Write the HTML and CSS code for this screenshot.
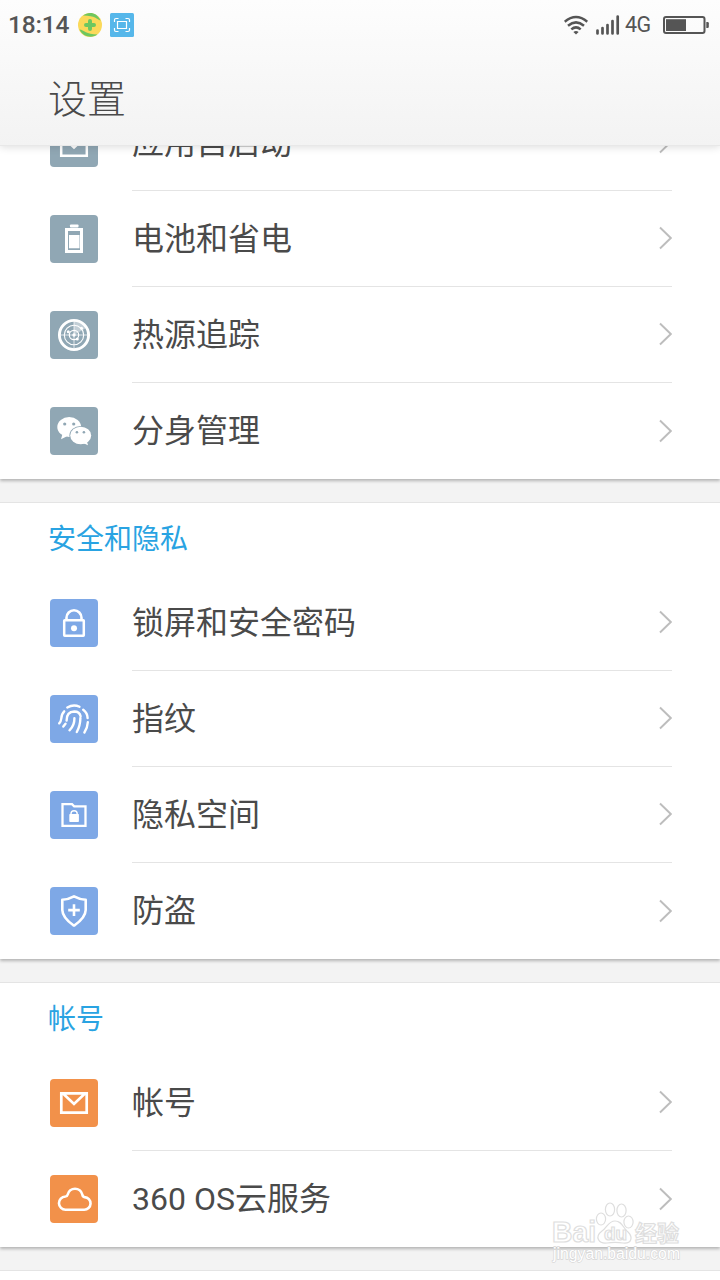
FILE: index.html
```html
<!DOCTYPE html>
<html lang="zh-CN">
<head>
<meta charset="utf-8">
<title>设置</title>
<link rel="stylesheet" href="styles.css">
</head>
<body>
<svg class="defs" aria-hidden="true">
  <symbol id="chevron" viewBox="0 0 14 24"><path d="M2 1.500 12.800 12 2 22.500" fill="none" stroke="#bdbdbd" stroke-width="1.900"/></symbol>
</svg>
<div class="screen">
  <header class="header">
    <div class="status">
      <span class="clock">18:14</span>
      <svg class="app" width="24" height="24" viewBox="0 0 24 24">
        <circle cx="12" cy="12" r="12" fill="#fbd95a"/>
        <path d="M5 2.600C11-2 19-.5 22.500 7.500 19 6.500 17 2.500 5 2.600zM19.500 21.500C14 25.500 5 24 1.500 16.500 6 17 8 21.500 19.500 21.500z" fill="#6dc760"/>
        <path d="M12 8v8M8 12h8" stroke="#6dc760" stroke-width="4" stroke-linecap="round"/>
      </svg>
      <svg class="app" width="24" height="24" viewBox="0 0 24 24">
        <rect width="24" height="24" rx="1.500" fill="#56b7ea"/>
        <path d="M4.500 9V7Q4.500 5.500 6 5.500h2.500M15.500 5.500H18q1.500 0 1.500 1.500v2M19.500 15v2q0 1.500-1.500 1.500h-2.500M8.500 18.500H6q-1.500 0-1.500-1.500v-2M7.500 8.500h9v7h-9z" fill="none" stroke="#fff" stroke-width="1.200"/>
      </svg>
      <span class="spacer"></span>
      <svg class="wifi" width="24" height="20" viewBox="0 0 24 20" fill="none" stroke="#555" stroke-width="2.500">
        <path d="M.7 6.700Q12-2.700 23.300 6.700M4 10.700Q12 4 20 10.700M7.300 14.400Q12 10.400 16.700 14.400"/>
        <path d="M9.400 17Q12 15 14.600 17L12 19.600z" fill="#555" stroke="none"/>
      </svg>
      <svg class="signal" width="24" height="20" viewBox="0 0 24 20" stroke="#555" stroke-width="2.700" stroke-linecap="round">
        <path d="M1.500 15.500v3M6.500 13v5.500M11.500 10v8.500M16.500 6v12.500M21.700 1.500v17"/>
      </svg>
      <span class="net">4G</span>
      <svg class="battery" width="46" height="18" viewBox="0 0 46 18">
        <rect x="1" y="1" width="40.500" height="16" rx="2" fill="none" stroke="#555" stroke-width="2"/>
        <path d="M3 3.200h20v11.800H3z" fill="#555"/>
        <path d="M43.300 6h1.300q1.200 0 1.200 1.200v3.600q0 1.200-1.200 1.200h-1.300z" fill="#555"/>
      </svg>
    </div>
    <h1 class="title">设置</h1>
  </header>

  <main class="scroll">
    <section class="card">
      <div class="row">
        <svg class="icon slate" viewBox="0 0 48 48"><path d="M11.200 11h25.600v25.800H11.200zM17 22l7 6.500 7-6.500" fill="none" stroke="#fff" stroke-width="2.500"/></svg>
        <div class="cell"><span class="label">应用自启动</span><svg class="chev"><use href="#chevron"/></svg></div>
      </div>
      <div class="row">
        <svg class="icon slate" viewBox="0 0 48 48"><rect x="20" y="9.500" width="8.500" height="3" rx=".8" fill="#fff"/><rect x="16.500" y="14.500" width="15" height="22" fill="none" stroke="#fff" stroke-width="3"/><path d="M19 20h10.500v13.300H19z" fill="#fff"/></svg>
        <div class="cell"><span class="label">电池和省电</span><svg class="chev"><use href="#chevron"/></svg></div>
      </div>
      <div class="row">
        <svg class="icon slate" viewBox="0 0 48 48"><path d="M24 24V9a15 15 0 0 1 13 7.500z" fill="#fff" opacity=".45"/><g fill="none" stroke="#fff"><circle cx="24" cy="24" r="14.600" stroke-width="2.900"/><circle cx="24" cy="24" r="9.700" stroke-width="1.100"/><circle cx="24" cy="24" r="4.700" stroke-width="1.200"/><path d="M24 10v28M10 24h28" stroke-width=".9" opacity=".8"/></g><g fill="#fff"><circle cx="24" cy="24" r="1.700"/><circle cx="18.300" cy="20.800" r="1.500"/><circle cx="31.500" cy="17.300" r="1.500"/><circle cx="27.300" cy="28" r="1.500"/></g></svg>
        <div class="cell"><span class="label">热源追踪</span><svg class="chev"><use href="#chevron"/></svg></div>
      </div>
      <div class="row">
        <svg class="icon slate" viewBox="0 0 48 48"><ellipse cx="19.200" cy="20" rx="11.900" ry="10" fill="#fff"/><path d="M12.500 27 11 32.300l6-3z" fill="#fff"/><ellipse cx="30.700" cy="28.500" rx="11.300" ry="9.600" fill="#90a7b4"/><ellipse cx="30.700" cy="28.500" rx="10.500" ry="8.800" fill="#fff"/><path d="M33 36l5 2.300-1.200-4.300z" fill="#fff"/><g fill="#90a7b4"><circle cx="14.700" cy="17" r="1.600"/><circle cx="23.700" cy="17" r="1.600"/><circle cx="26.900" cy="25.300" r="1.300"/><circle cx="33.900" cy="25.300" r="1.300"/></g></svg>
        <div class="cell last"><span class="label">分身管理</span><svg class="chev"><use href="#chevron"/></svg></div>
      </div>
    </section>

    <section class="card">
      <h2 class="heading">安全和隐私</h2>
      <div class="row">
        <svg class="icon blue" viewBox="0 0 48 48"><g fill="none" stroke="#fff"><rect x="14.200" y="21.200" width="19.600" height="15.600" rx=".5" stroke-width="2.500"/><path d="M16.500 21v-2.200a7.500 7.500 0 0 1 15 0V21" stroke-width="2.600"/></g><circle cx="24" cy="29.300" r="3" fill="#fff"/></svg>
        <div class="cell"><span class="label">锁屏和安全密码</span><svg class="chev"><use href="#chevron"/></svg></div>
      </div>
      <div class="row">
        <svg class="icon blue" viewBox="0 0 48 48"><path d="M17.300 12.500Q23.500 8.800 29.500 11.800M14.200 16.300Q11.500 19 11.300 23.500 11 26.500 9.200 28.300M33.200 14.700Q37.500 18 37.600 23M37.800 27.300Q37.500 33 34.400 37.500M13.300 31.500l2.200-2.700M16.600 25.600Q16.500 16.700 24.300 16.500 29.700 16.500 30.600 21.300M30.400 23Q30.200 31 26.800 37M19.500 35.300Q24.600 30.500 24.400 23.300" fill="none" stroke="#fff" stroke-width="2.400" stroke-linecap="round"/></svg>
        <div class="cell"><span class="label">指纹</span><svg class="chev"><use href="#chevron"/></svg></div>
      </div>
      <div class="row">
        <svg class="icon blue" viewBox="0 0 48 48"><path d="M12.500 13.100h9.500l2.200 2.200h11.300v19.600h-23z" fill="none" stroke="#fff" stroke-width="2.300"/><rect x="19.300" y="23" width="9.600" height="8" rx=".7" fill="#fff"/><path d="M21 24v-1.200a3.100 3.100 0 0 1 6.200 0V24" fill="none" stroke="#fff" stroke-width="1.400"/></svg>
        <div class="cell"><span class="label">隐私空间</span><svg class="chev"><use href="#chevron"/></svg></div>
      </div>
      <div class="row">
        <svg class="icon blue" viewBox="0 0 48 48"><path d="M24 9.300Q29.500 12.300 35.700 12.800V23Q35.500 30.500 24.600 38.300 24 38.700 23.400 38.300 12.500 30.500 12.300 23V12.800Q18.500 12.300 24 9.300zM24 17.300v11.600M18.200 23.100h11.600" fill="none" stroke="#fff" stroke-width="2.600" stroke-linejoin="round"/></svg>
        <div class="cell last"><span class="label">防盗</span><svg class="chev"><use href="#chevron"/></svg></div>
      </div>
    </section>

    <section class="card">
      <h2 class="heading">帐号</h2>
      <div class="row">
        <svg class="icon orange" viewBox="0 0 48 48"><path d="M11.300 14.300h25.400v19.400H11.300zM13 14.500 24 25l11-10.500" fill="none" stroke="#fff" stroke-width="2.700"/></svg>
        <div class="cell"><span class="label">帐号</span><svg class="chev"><use href="#chevron"/></svg></div>
      </div>
      <div class="row">
        <svg class="icon orange" viewBox="0 0 48 48"><path d="M15.700 34.700a6.500 6.500 0 0 1-.3-13.200Q17.300 21.300 17.700 19.500A7.500 7.500 0 0 1 32.300 19.500Q32.700 21.800 34.500 22.100A6.300 6.300 0 0 1 34 34.700z" fill="none" stroke="#fff" stroke-width="2.600"/></svg>
        <div class="cell last"><span class="label">360 OS云服务</span><svg class="chev"><use href="#chevron"/></svg></div>
      </div>
    </section>

    <section class="card next"></section>
  </main>

  <svg class="watermark" width="140" height="66" viewBox="0 0 140 66">
    <g class="mark">
      <text class="brand" x="6" y="43" textLength="44" lengthAdjust="spacingAndGlyphs">Bai</text>
      <ellipse cx="55" cy="20" rx="4.600" ry="6"/>
      <ellipse cx="64" cy="10.500" rx="4.600" ry="6.500"/>
      <ellipse cx="75.500" cy="11.500" rx="4.600" ry="6.500"/>
      <ellipse cx="82.500" cy="23" rx="4.600" ry="6"/>
      <path d="M69 22C62 22 61 29 56 32 48 38 53 45 61 44 67 43 71 43 77 44 86 45 87 38 82 33 77 29 76 22 69 22z"/>
      <text class="du" x="58" y="41">du</text>
      <text class="brand cjk" x="89" y="42">经验</text>
      <text class="site" x="7" y="60" textLength="127" lengthAdjust="spacingAndGlyphs">jingyan.baidu.com</text>
    </g>
  </svg>
</div>
</body>
</html>
```

FILE: styles.css
```css
* { box-sizing: border-box; }

body {
  margin: 0;
  background: #f3f3f3;
  color: #4a4a4a;
  font-family: Roboto, "Noto Sans CJK SC", sans-serif;
}

.defs { position: absolute; width: 0; height: 0; }

.screen {
  position: relative;
  display: flex;
  flex-direction: column;
  width: 720px;
  height: 1280px;
  overflow: hidden;
}

.header {
  position: relative;
  z-index: 1;
  flex: none;
  height: 146px;
  background: linear-gradient(#fdfdfd, #f3f3f3);
  border-bottom: 1px solid #e8e8e8;
  box-shadow: 0 1px 8px rgba(0, 0, 0, 0.14);
}

.status {
  display: flex;
  align-items: center;
  height: 50px;
  padding: 0 11px 0 8px;
  color: #555;
}

.clock {
  width: 70px;
  font-size: 24.5px;
  font-weight: 500;
  line-height: 52px;
  letter-spacing: -0.2px;
}

.app { margin-right: 8px; }
.spacer { flex: 1; }
.wifi { margin-right: 8px; }
.signal { margin-right: 5px; }

.net {
  width: 38px;
  font-size: 21.5px;
  line-height: 50px;
  letter-spacing: -0.5px;
}

.title {
  margin: 0;
  padding-left: 48px;
  font-size: 39px;
  font-weight: 300;
  line-height: 100px;
}

.scroll {
  flex: 1;
  min-height: 0;
  overflow: hidden;
}

.card {
  margin-bottom: 24px;
  background: #fff;
  box-shadow: 0 -1px 0 #e4e4e4, 0 2px 3px rgba(0, 0, 0, 0.26);
}

.card:first-child { margin-top: -51px; }
.next { height: 40px; }

.heading {
  margin: 0;
  padding-left: 48px;
  height: 72px;
  color: #29a3e2;
  font-size: 28px;
  font-weight: 400;
  line-height: 73px;
}

.row {
  display: flex;
  align-items: center;
  gap: 34px;
  height: 96px;
  padding: 0 48px 0 50px;
}

.icon {
  flex: none;
  width: 48px;
  height: 48px;
  border-radius: 4px;
}

.slate { background: #90a7b4; }
.blue { background: #7ea8e6; }
.orange { background: #f2914a; }

.cell {
  flex: 1;
  display: flex;
  align-items: center;
  justify-content: space-between;
  height: 96px;
  border-bottom: 1px solid #e4e4e4;
}

.last { border-bottom-color: transparent; }

.label {
  font-size: 32px;
  line-height: 94px;
}

.chev {
  width: 14px;
  height: 24px;
  margin-bottom: 1px;
}

.last .chev { margin-bottom: 0; }

.watermark {
  position: absolute;
  z-index: 2;
  left: 546px;
  top: 1199px;
}

.mark {
  fill: rgba(255, 255, 255, 0.75);
  stroke: #dedede;
  stroke-width: 1.2px;
}

.brand { font: bold 29px "Liberation Sans", sans-serif; }
.cjk { font: bold 22px "Noto Sans CJK SC", sans-serif; }
.du { font: bold 19px "Liberation Sans", sans-serif; }

.site {
  font: 16px "Liberation Sans", sans-serif;
  fill: #fff;
  stroke: #d6d6d6;
  stroke-width: 1.4px;
  paint-order: stroke;
}
```
